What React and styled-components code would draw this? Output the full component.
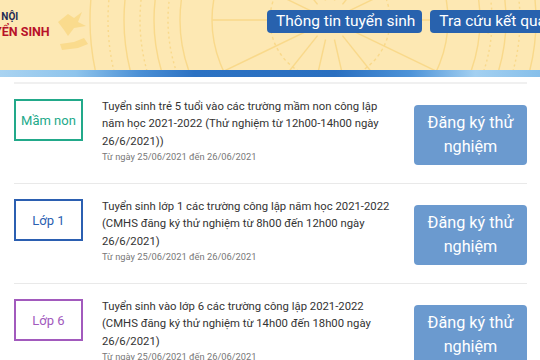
import React from "react"
import styled, { createGlobalStyle } from 'styled-components'

const GlobalStyle = createGlobalStyle`
    html, body {
        margin: 0;
        padding: 0;
        background: #fff;
        overflow: hidden;
        font-family: Roboto, "Liberation Sans", Arial, sans-serif;
    }
`

const Page = styled.div`
    width: 540px;
    height: 360px;
    overflow: hidden;
`

const Header = styled.header`
    position: relative;
    height: 70px;
    background: #fde8b3;
    overflow: hidden;
    display: flex;
    align-items: flex-start;
`

const Pattern = styled.svg`
    position: absolute;
    left: 0;
    top: 0;
    pointer-events: none;
`

const Brand = styled.div`
    position: relative;
    width: 267px;
    flex-shrink: 0;
    padding-top: 9px;
    font-weight: 700;
    white-space: nowrap;
`

const BrandLine = styled.div`
    margin-left: ${p => p.$shift}px;
    color: ${p => p.$color};
    font-size: ${p => p.$size}px;
    line-height: ${p => p.$lh}px;
`

const Nav = styled.nav`
    position: relative;
    display: flex;
    gap: 8px;
    padding-top: 10px;
    white-space: nowrap;
`

const NavButton = styled.a`
    display: block;
    height: 23px;
    line-height: 23px;
    padding: 0 7px 0 9px;
    background: #2862ae;
    color: #fff;
    border-radius: 4px;
    font-size: 15.5px;
`

const Strip = styled.div`
    height: 7px;
    background: linear-gradient(90deg, #a9d3f1 0%, #8ec4ec 14%, #4a8fd5 26%, #2c72c3 36%, #2a6fc0 62%, #4d93d8 76%, #a3d0f1 88%, #86bfea 100%);
`

const List = styled.section`
    margin: 5px 13px 0 14px;
    border-top: 2px solid #f0f0f0;
`

const Row = styled.div`
    box-sizing: border-box;
    height: 100px;
    display: grid;
    grid-template-columns: 69px 1fr 113px;
    column-gap: 19px;
    align-items: start;
    padding-top: 15px;
    border-bottom: 1px solid #e9e9e9;
`

const Badge = styled.div`
    box-sizing: border-box;
    height: 42px;
    border: 2px solid ${p => p.$color};
    color: ${p => p.$color};
    display: flex;
    align-items: center;
    justify-content: center;
    font-size: 13px;
`

const Info = styled.div`
    color: #333;
`

const Title = styled.div`
    font-size: 11.3px;
    line-height: 17.3px;
    margin-top: -1px;
`

const DateText = styled.div`
    font-size: 9.3px;
    line-height: 13px;
    color: #777;
`

const RegisterButton = styled.button`
    height: 60px;
    margin-top: 6px;
    border: none;
    border-radius: 4px;
    background: #6b9acf;
    color: #fff;
    font-family: inherit;
    font-size: 16.2px;
    line-height: 24px;
    padding: 0 6px;
`

const rows = [
    {
        badge: 'Mầm non',
        color: '#22a98a',
        title: 'Tuyển sinh trẻ 5 tuổi vào các trường mầm non công lập năm học 2021-2022 (Thử nghiệm từ 12h00-14h00 ngày 26/6/2021))'
    },
    {
        badge: 'Lớp 1',
        color: '#2b5fb1',
        title: 'Tuyển sinh lớp 1 các trường công lập năm học 2021-2022 (CMHS đăng ký thử nghiệm từ 8h00 đến 12h00 ngày 26/6/2021)'
    },
    {
        badge: 'Lớp 6',
        color: '#a25abd',
        title: 'Tuyển sinh vào lớp 6 các trường công lập 2021-2022 (CMHS đăng ký thử nghiệm từ 14h00 đến 18h00 ngày 26/6/2021)'
    }
]

function DrumPattern() {
    const rings = [150, 162, 176, 190, 206, 222, 240]
    return (
        <Pattern width="540" height="70" viewBox="0 0 540 70">
            <g fill="none" stroke="#f8d37a" strokeWidth="1.4" opacity="0.7">
                {rings.map((r, i) => (
                    <circle key={r} cx="330" cy="20" r={r} strokeDasharray={i % 2 ? '2 3' : 'none'} />
                ))}
                <circle cx="330" cy="20" r="118" />
                <circle cx="330" cy="20" r="60" strokeDasharray="3 3" />
                {Array.from({ length: 14 }).map((_, i) => {
                    const a = (i / 14) * Math.PI * 2
                    const x1 = 330 + Math.cos(a) * 20
                    const y1 = 20 + Math.sin(a) * 20
                    const x2 = 330 + Math.cos(a) * 118
                    const y2 = 20 + Math.sin(a) * 118
                    return <line key={i} x1={x1} y1={y1} x2={x2} y2={y2} />
                })}
            </g>
            <g fill="#f9d67e" opacity="0.7">
                <path d="M58 22 l10 -8 l6 4 l8 -6 l-4 10 l8 4 l-12 2 l-6 8 l-4 -6 z" />
                <path d="M60 44 l14 -2 l10 -4 l4 6 l-10 4 l-16 2 z" />
                <path d="M480 26 l12 -6 l6 8 l-10 6 z" />
            </g>
        </Pattern>
    )
}

export default class App extends React.Component {

    render(){
        return (
            <Page>
                <GlobalStyle />
                <Header>
                    <DrumPattern />
                    <Brand>
                        <BrandLine $shift={-15} $color="#1d2b55" $size={10} $lh={15}>HÀ NỘI</BrandLine>
                        <BrandLine $shift={-22} $color="#b8112a" $size={12.5} $lh={16}>TUYỂN SINH</BrandLine>
                    </Brand>
                    <Nav>
                        <NavButton>Thông tin tuyển sinh</NavButton>
                        <NavButton>Tra cứu kết quả</NavButton>
                    </Nav>
                </Header>
                <Strip />
                <List>
                    {rows.map((row, index) => {
                        return (
                            <Row key={index}>
                                <Badge $color={row.color}>{row.badge}</Badge>
                                <Info>
                                    <Title>{row.title}</Title>
                                    <DateText>Từ ngày 25/06/2021 đến 26/06/2021</DateText>
                                </Info>
                                <RegisterButton>Đăng ký thử nghiệm</RegisterButton>
                            </Row>
                        )
                    })}
                </List>
            </Page>
        )
    }

}
